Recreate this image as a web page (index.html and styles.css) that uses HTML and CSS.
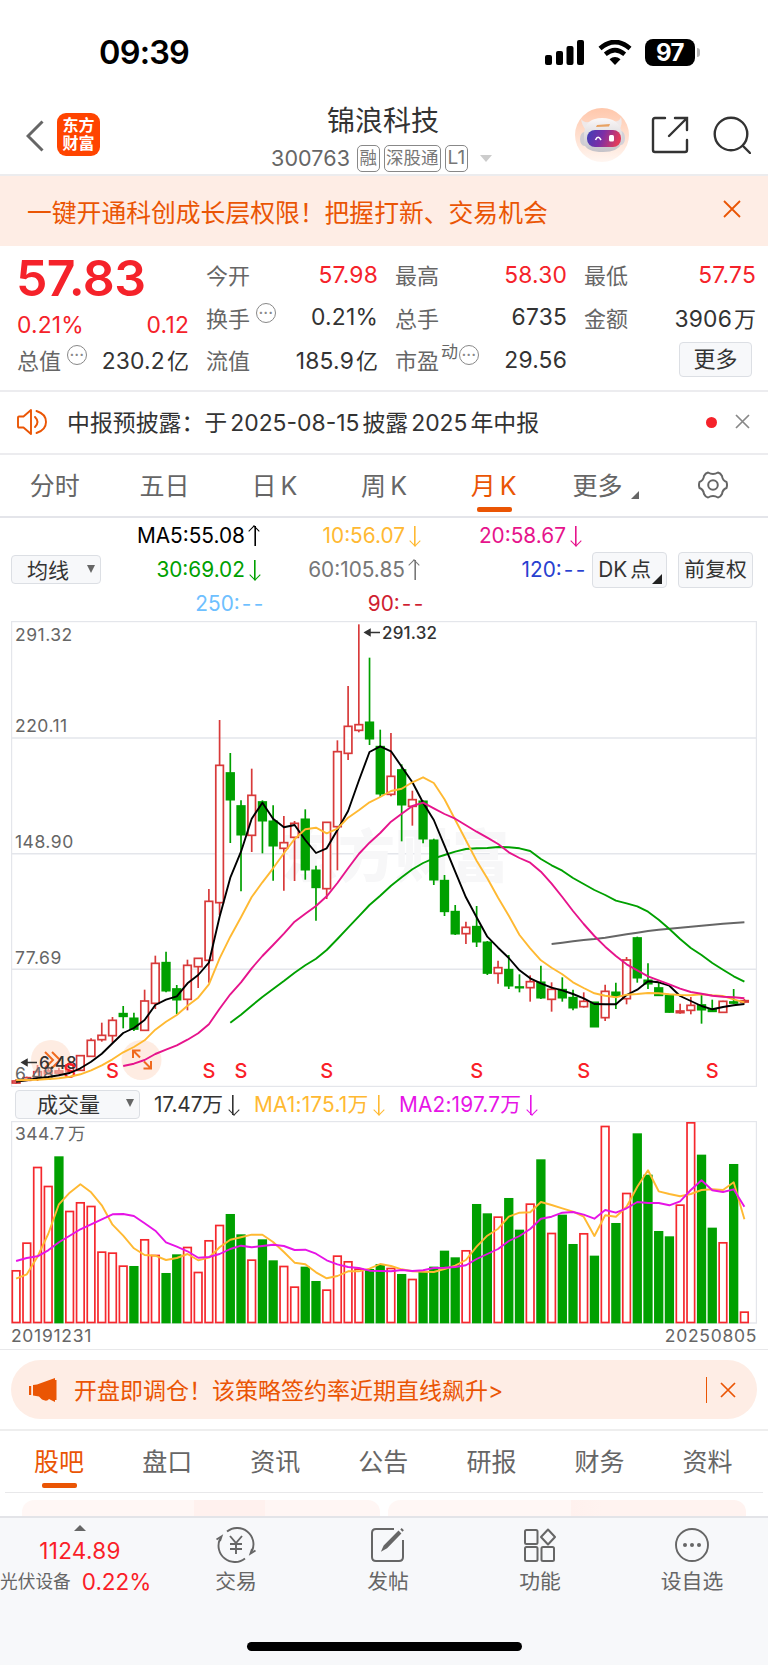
FILE: index.html
```html
<!DOCTYPE html>
<html lang="zh-CN">
<head>
    <meta charset="UTF-8">
    <meta name="viewport" content="width=device-width, initial-scale=1.0">
    <title>锦浪科技 300763</title>
    <link rel="stylesheet" href="styles.css">
</head>
<body>
    <!-- Status bar -->
    <div class="status-bar">
        <div class="clock">09:39</div>
        <svg class="signal" width="39" height="25" viewBox="0 0 39 25">
            <rect x="0" y="15" width="7" height="10" rx="2"/>
            <rect x="11" y="11" width="7" height="14" rx="2"/>
            <rect x="21.5" y="6" width="7" height="19" rx="2"/>
            <rect x="32" y="0" width="7" height="25" rx="2"/>
        </svg>
        <svg class="wifi" width="34" height="25" viewBox="0 0 34 25">
            <path d="M2 8.5 Q17 -4.5 32 8.5" fill="none" stroke="#000" stroke-width="4.6"/>
            <path d="M7.3 14.2 Q17 6 26.7 14.2" fill="none" stroke="#000" stroke-width="4.4"/>
            <path d="M11.5 19.3 Q17 14.5 22.5 19.3 L17 25 Z"/>
        </svg>
        <div class="battery">97</div>
        <div class="battery-tip"></div>
    </div>

    <!-- Header -->
    <div class="header">
        <div class="header-left">
            <svg width="18" height="32" viewBox="0 0 18 32">
                <path d="M16.5 1.5 L2 16 L16.5 30.5" fill="none" stroke="#666" stroke-width="3"/>
            </svg>
            <div class="app-logo">东方<br>财富</div>
        </div>
        <div class="header-title">
            <div class="stock-name">锦浪科技</div>
            <div class="stock-code">
                <span class="code">300763</span>
                <span class="tag">融</span><span class="tag">深股通</span><span class="tag">L1</span>
                <span class="caret"></span>
            </div>
        </div>
        <div class="header-right">
            <svg width="54" height="54" viewBox="0 0 54 54">
                <defs>
                    <linearGradient id="halo" x1="0" y1="0" x2="0" y2="1">
                        <stop offset="0" stop-color="#ffc7ab"/><stop offset="1" stop-color="#fff6f1"/>
                    </linearGradient>
                    <linearGradient id="visor" x1="0" y1="0" x2="1" y2="0.2">
                        <stop offset="0" stop-color="#3d3fb8"/><stop offset="0.5" stop-color="#7b2fa6"/><stop offset="1" stop-color="#e03a5c"/>
                    </linearGradient>
                    <linearGradient id="helmet" x1="0" y1="0" x2="0" y2="1">
                        <stop offset="0" stop-color="#fbf8f8"/><stop offset="1" stop-color="#c4c2c8"/>
                    </linearGradient>
                </defs>
                <circle cx="27" cy="27" r="27" fill="url(#halo)"/>
                <path d="M6 11 Q7 18 11 22 L18 13 Q9 16 6 11 Z M46 9 Q48 17 44 22 L36 13 Q44 15 46 9 Z" fill="#efe9ea"/>
                <ellipse cx="9.5" cy="31" rx="4.5" ry="7" fill="#cfcdd3"/>
                <ellipse cx="46" cy="30" rx="4" ry="7" fill="#d4d2d8"/>
                <path d="M9 25 Q11 10 27 10 Q44 10 47 25 L47 35 Q43 44 28 44 Q12 44 9 36 Z" fill="url(#helmet)"/>
                <path d="M22 17 L35 16 L34 18.500 L21 19 Z" fill="#e8a262"/>
                <rect x="12" y="22" width="34" height="17" rx="8" fill="url(#visor)"/>
                <path d="M20.5 32 Q23 26.5 26 32" fill="none" stroke="#fff" stroke-width="1.6"/>
                <rect x="34" y="27" width="5" height="6.5" rx="1.5" fill="#fff"/>
            </svg>
            <svg width="38" height="38" viewBox="0 0 38 38" fill="none" stroke="#333" stroke-width="2.4" stroke-linecap="round">
                <path d="M14 2 H4 Q2 2 2 4 V34 Q2 36 4 36 H34 Q36 36 36 34 V24"/>
                <path d="M24 2 H36 V14 M36 2 L18 20"/>
            </svg>
            <svg width="38" height="38" viewBox="0 0 38 38" fill="none" stroke="#333" stroke-width="2.4" stroke-linecap="round">
                <circle cx="18" cy="18" r="16.3"/>
                <path d="M30 30 L37 37"/>
            </svg>
        </div>
    </div>

    <!-- Top banner -->
    <div class="banner">
        <span>一键开通科创成长层权限！把握打新、交易机会</span>
        <svg width="18" height="18" viewBox="0 0 18 18"><path d="M1 1 L17 17 M17 1 L1 17" stroke="#ea5504" stroke-width="1.8"/></svg>
    </div>

    <!-- Quote -->
    <div class="quote">
        <div class="quote-col main-col">
            <div class="price">57.83</div>
            <div class="cell change red"><b>0.21%</b><b>0.12</b></div>
            <div class="cell"><span>总值<i class="dots">···</i></span><b>230.2<em>亿</em></b></div>
        </div>
        <div class="quote-col">
            <div class="cell red"><span>今开</span><b>57.98</b></div>
            <div class="cell"><span>换手<i class="dots">···</i></span><b>0.21%</b></div>
            <div class="cell"><span>流值</span><b>185.9<em>亿</em></b></div>
        </div>
        <div class="quote-col">
            <div class="cell red"><span>最高</span><b>58.30</b></div>
            <div class="cell"><span>总手</span><b>6735</b></div>
            <div class="cell"><span>市盈<sup>动</sup><i class="dots tight">···</i></span><b>29.56</b></div>
        </div>
        <div class="quote-col">
            <div class="cell red"><span>最低</span><b>57.75</b></div>
            <div class="cell"><span>金额</span><b>3906<em>万</em></b></div>
            <div class="cell more-cell"><div class="more-btn">更多</div></div>
        </div>
    </div>

    <!-- Notice -->
    <div class="notice">
        <svg width="31" height="26" viewBox="0 0 31 26" fill="none" stroke="#ea5504" stroke-width="1.9" stroke-linejoin="round" stroke-linecap="round">
            <path d="M1 8.5 Q1 7.5 2 7.5 H6.5 L14 1 V25 L6.5 18.5 H2 Q1 18.5 1 17.5 Z"/>
            <path d="M18 8 Q23 13 18 18 M19.5 2 Q29 5 29 13 Q29 21 19.5 24"/>
        </svg>
        <span class="notice-text">中报预披露：于<u>2025-08-15</u>披露<u>2025</u>年中报</span>
        <span class="red-dot"></span>
        <svg width="15" height="15" viewBox="0 0 15 15"><path d="M1 1 L14 14 M14 1 L1 14" stroke="#888" stroke-width="1.7"/></svg>
    </div>

    <!-- Period tabs -->
    <div class="period-tabs">
        <div class="tab">分时</div>
        <div class="tab">五日</div>
        <div class="tab">日<u>K</u></div>
        <div class="tab">周<u>K</u></div>
        <div class="tab active">月<u>K</u></div>
        <div class="tab with-corner">更多<i class="corner"></i></div>
        <div class="tab gear">
            <svg width="30" height="28" viewBox="0 0 30 28" fill="none" stroke="#666" stroke-width="2">
                <path d="M10 1.5 Q15 4.5 20 1.5 Q22.5 2 24 5 Q24.500 9.500 28.500 11 Q29.500 14 28.500 17 Q24.500 18.500 24 23 Q22.500 26 20 26.500 Q15 23.500 10 26.500 Q7.500 26 6 23 Q5.500 18.500 1.500 17 Q.500 14 1.500 11 Q5.500 9.500 6 5 Q7.500 2 10 1.500 Z"/>
                <circle cx="15" cy="14" r="4.800"/>
            </svg>
        </div>
    </div>

    <!-- Moving averages -->
    <div class="ma-panel">
        <div class="select ma-select">均线<i></i></div>
        <div class="ma-grid">
            <span class="ma5">MA5:55.08<s class="up"></s></span>
            <span class="ma10">10:56.07<s></s></span>
            <span class="ma20">20:58.67<s></s></span>
            <span class="ma30">30:69.02<s></s></span>
            <span class="ma60">60:105.85<s class="up"></s></span>
            <span class="ma120">120:<u>--</u></span>
            <span class="ma250">250:<u>--</u></span>
            <span class="ma90">90:<u>--</u></span>
        </div>
        <div class="small-btn dk-btn">DK<em>点</em><i class="corner"></i></div>
        <div class="small-btn">前复权</div>
    </div>

    <!-- Monthly candles -->
    <svg id="k-chart" class="chart" width="746" height="466" viewBox="11 6 746 466">
        <g class="frame">
            <rect x="11.5" y="6.500" width="745" height="465"/>
            <path d="M11 123 H757 M11 238.700 H757 M11 354.300 H757"/>
        </g>
        <text class="watermark" x="281" y="262">东方财富</text>
        <g id="candles"></g>
        <g class="chart-btn">
            <circle cx="51" cy="445" r="20"/>
            <circle cx="141.500" cy="445" r="20"/>
            <path d="M45 437 L53 445 L45 453 M52 437 L60 445 L52 453"/>
            <path d="M133 443 V435.500 H140.500 M133 435.500 L140 442.500 M151 446 V453.500 H143.500 M151 453.500 L144 446.500"/>
        </g>
        <g class="axis">
            <text x="15" y="26">291.32</text>
            <text x="15" y="117">220.11</text>
            <text x="15" y="233">148.90</text>
            <text x="15" y="349">77.69</text>
            <text x="15" y="465">6.48</text>
        </g>
        <g class="mark">
            <path d="M367 17.500 H380 M365 17.500 L370 14.500 V20.500 Z M24 447.500 H37 M22 447.500 L27 444.500 V450.500 Z"/>
            <text x="382" y="24">291.32</text>
            <text x="39" y="454">6.48</text>
        </g>
        <g class="signals" id="signals"></g>
        <g id="ma-lines"></g>
    </svg>

    <!-- Volume -->
    <div class="volume-head">
        <div class="select volume-select">成交量<i></i></div>
        <span class="v-now">17.47万<s></s></span>
        <span class="v-ma1">MA1:175.1万<s></s></span>
        <span class="v-ma2">MA2:197.7万<s></s></span>
    </div>
    <svg id="v-chart" class="chart" width="746" height="203" viewBox="11 41 746 203">
        <rect class="frame" x="11.500" y="41.500" width="745" height="201.500"/>
        <text class="axis" x="15" y="59.500">344.7<tspan dx="3">万</tspan></text>
        <g id="volumes"></g>
    </svg>
    <div class="dates"><span>20191231</span><span>20250805</span></div>

    <!-- Promo -->
    <div class="promo-wrap">
        <div class="promo">
            <svg width="28" height="24" viewBox="0 0 28 24" fill="#ea5504">
                <path d="M0 8 H2.200 V17 H0 Z M4 7 L8 6.500 L26 0 V2 H27.500 V22 H26 V24 L20 21 Q18 24 13 21.500 L10 18.500 L4 17.500 Z"/>
            </svg>
            <span class="promo-text">开盘即调仓！该策略签约率近期直线飙升&gt;</span>
            <span class="promo-line"></span>
            <svg width="16" height="16" viewBox="0 0 16 16"><path d="M1 1 L15 15 M15 1 L1 15" stroke="#ea5504" stroke-width="1.700"/></svg>
        </div>
    </div>

    <!-- Content tabs -->
    <div class="content-tabs">
        <div class="tab active">股吧</div>
        <div class="tab">盘口</div>
        <div class="tab">资讯</div>
        <div class="tab">公告</div>
        <div class="tab">研报</div>
        <div class="tab">财务</div>
        <div class="tab">资料</div>
    </div>
    <div class="cards">
        <div class="card"></div>
        <div class="card right-card"></div>
    </div>

    <!-- Bottom bar -->
    <div class="bottom-bar">
        <div class="index-box">
            <i class="tri-up"></i>
            <div class="index-value">1124.89</div>
            <div class="index-row"><span>光伏设备</span><b>0.22%</b></div>
        </div>
        <div class="bar-item">
            <svg width="40" height="36" viewBox="0 0 40 36" fill="none" stroke="#666" stroke-width="1.900">
                <path d="M11 4.500 A16.300 16.300 0 0 1 36 24 M29 31.500 A16.300 16.300 0 0 1 4 12"/>
                <path d="M0.500 12.500 L5.500 9.500 L4 14 M39.500 23.500 L34.500 26.500 L36 22"/>
                <path d="M14 9 L20 16 L26 9 M20 16 V27 M14 17 H26 M14 22 H26"/>
            </svg>
            <span>交易</span>
        </div>
        <div class="bar-item">
            <svg width="36" height="36" viewBox="0 0 36 36" fill="none" stroke="#666" stroke-width="2">
                <path d="M24 2 H6 Q2 2 2 6 V30 Q2 34 6 34 H29 Q33 34 33 30 V13"/>
                <path d="M13 22.500 L14.500 19 L28.500 5 L30 6.500 L16.500 20.500 Z M31 1.800 L33.200 4" fill="#666"/>
            </svg>
            <span>发帖</span>
        </div>
        <div class="bar-item">
            <svg width="34" height="36" viewBox="0 0 34 36" fill="none" stroke="#666" stroke-width="2" stroke-linejoin="round">
                <rect x="2" y="3" width="12.500" height="14" rx="1.500"/>
                <rect x="2" y="20" width="12.500" height="14" rx="1.500"/>
                <rect x="18.500" y="20" width="12.500" height="14" rx="1.500"/>
                <path d="M25 2.500 L32 10 L25 17.500 L18 10 Z"/>
            </svg>
            <span>功能</span>
        </div>
        <div class="bar-item">
            <svg width="36" height="36" viewBox="0 0 36 36">
                <circle cx="18" cy="18" r="16" fill="none" stroke="#666" stroke-width="1.900"/>
                <g fill="#666"><circle cx="11" cy="18" r="2"/><circle cx="18" cy="18" r="2"/><circle cx="25" cy="18" r="2"/></g>
            </svg>
            <span>设自选</span>
        </div>
        <div class="home-indicator"></div>
    </div>

    <script src="script.js"></script>
</body>
</html>
```

FILE: styles.css
```css
* {
    box-sizing: border-box;
}

body {
    margin: 0;
    width: 768px;
    height: 1665px;
    overflow: hidden;
    background-color: #fff;
    color: #333;
    font-family: Inter, "Noto Sans CJK SC", sans-serif;
    display: flex;
    flex-direction: column;
}

body > * {
    flex-shrink: 0;
}

b, i, em, u, s {
    font-weight: normal;
    font-style: normal;
    text-decoration: none;
}

svg {
    display: block;
}

/* Status bar */
.status-bar {
    height: 100px;
    padding: 4px 68px 0 99px;
    display: flex;
    align-items: center;
    color: #000;
}

.clock {
    font-size: 32.500px;
    font-weight: 600;
    letter-spacing: -0.8px;
    margin-right: auto;
}

.signal {
    margin-right: 14px;
}

.wifi {
    margin-right: 13px;
}

.battery {
    width: 50px;
    height: 27px;
    line-height: 27px;
    border-radius: 8px;
    background-color: #000;
    color: #fff;
    text-align: center;
    font-size: 24px;
    font-weight: 700;
    letter-spacing: -0.5px;
}

.battery-tip {
    width: 3px;
    height: 9px;
    margin-left: 2px;
    border-radius: 0 3px 3px 0;
    background-color: #b5b5b5;
}

/* Header */
.header {
    height: 76px;
    padding: 1px 17px 0 26px;
    display: flex;
    border-bottom: 2px solid #ececee;
}

.header-left {
    width: 219px;
    display: flex;
    align-items: center;
    padding-bottom: 6px;
}

.header-left svg {
    margin-top: 2px;
}

.app-logo {
    width: 43px;
    height: 43px;
    margin-left: 13px;
    padding-top: 4px;
    border-radius: 9px;
    background-color: #ff4400;
    color: #fff;
    font-size: 16px;
    line-height: 17.5px;
    font-weight: 700;
    text-align: center;
}

.header-title {
    width: 276px;
    text-align: center;
}

.stock-name {
    font-size: 28px;
    line-height: 40px;
}

.stock-code {
    display: flex;
    align-items: center;
    margin-left: 26px;
    height: 34px;
    color: #777;
}

.code {
    font-size: 21.5px;
    letter-spacing: 0.1px;
    margin-right: 7px;
    color: #666;
}

.tag {
    height: 27px;
    padding: 0 1.500px;
    margin-right: 4px;
    border: 1.5px solid #888;
    border-radius: 5px;
    font-size: 17.500px;
    line-height: 24px;
}

.tag:nth-of-type(4) {
    font-size: 19px;
}

.caret {
    margin-left: 8px;
    border: 6px solid transparent;
    border-top: 7px solid #ccc;
    border-bottom: 0;
}

.header-right {
    display: flex;
    align-items: center;
    gap: 22px;
    margin-left: auto;
    padding-bottom: 6px;
}

.header-right svg:last-child {
    margin-left: 2px;
}

/* Top banner */
.banner {
    height: 70px;
    padding: 0 27px;
    display: flex;
    align-items: center;
    justify-content: space-between;
    background-color: #feede5;
    color: #ea5504;
    font-size: 24.800px;
}

.banner svg {
    margin-bottom: 4px;
}

/* Quote */
.quote {
    height: 146px;
    padding: 8px 12px 0 17px;
    display: flex;
    gap: 17px;
    border-bottom: 2px solid #ececef;
}

.quote-col {
    flex: 1;
}

.price {
    height: 50px;
    line-height: 49px;
    margin-left: -1px;
    font-size: 50px;
    font-weight: 600;
    letter-spacing: -0.600px;
    color: #f5222a;
}

.cell {
    height: 42.500px;
    padding-bottom: 2px;
    display: flex;
    align-items: center;
    justify-content: space-between;
    font-size: 22px;
    color: #666;
}

.cell.change {
    height: 35px;
    padding: 5px 0 0;
}

.cell > span {
    display: flex;
    align-items: center;
}

.cell b {
    font-size: 22.800px;
    letter-spacing: 0.200px;
    color: #333;
}

.cell.red b {
    color: #f5222a;
}

.cell em {
    font-size: 22px;
    margin-left: 2px;
    letter-spacing: 0;
}

.cell sup {
    font-size: 17px;
    line-height: 20px;
    margin-bottom: 14px;
    margin-left: 2px;
}

.dots {
    width: 20px;
    height: 20px;
    margin-left: 6px;
    margin-bottom: 8px;
    border: 1.500px solid #888;
    border-radius: 50%;
    line-height: 16px;
    font-size: 13px;
    font-weight: 700;
    letter-spacing: 0.500px;
    text-align: center;
    color: #888;
}

.dots.tight {
    margin-left: 1px;
}

.more-cell {
    justify-content: flex-end;
    padding-right: 4px;
}

.more-btn {
    width: 73px;
    height: 35px;
    border: 1px solid #dcdfe4;
    border-radius: 4px;
    background-color: #f7f8fa;
    line-height: 32px;
    text-align: center;
    color: #333;
}

/* Notice */
.notice {
    height: 63px;
    padding: 0 18px 0 17px;
    display: flex;
    align-items: center;
    border-bottom: 2px solid #ececef;
}

.notice > svg {
    margin-bottom: 2px;
}

.notice-text {
    margin-left: 19px;
    margin-right: auto;
    padding-bottom: 3px;
    font-size: 22.900px;
}

.notice-text u {
    margin: 0 3px;
}

.red-dot {
    width: 11px;
    height: 11px;
    margin-right: 18px;
    margin-bottom: 1px;
    border-radius: 50%;
    background-color: #f5222a;
}

/* Tabs */
.tab {
    position: relative;
    text-align: center;
    font-size: 25px;
    color: #666;
}

.tab u {
    margin-left: 4px;
}

.tab.active {
    color: #ea5504;
}

.tab.active::after {
    content: "";
    position: absolute;
    left: 50%;
    bottom: 4px;
    width: 35px;
    height: 5px;
    margin-left: -17px;
    border-radius: 2px;
    background-color: #ea5504;
}

.period-tabs {
    height: 63px;
    display: flex;
    border-bottom: 2px solid #e4e5ea;
}

.period-tabs .tab {
    width: 109.800px;
    line-height: 62px;
}

.corner {
    display: inline-block;
    border-left: 8px solid transparent;
    border-bottom: 8px solid #666;
}

.period-tabs .corner {
    margin-left: 9px;
    vertical-align: -4px;
}

.tab.with-corner {
    padding-left: 5px;
}

.tab.gear svg {
    margin: 16px 0 0 39.500px;
}

/* Moving averages */
.ma-panel {
    height: 103px;
    padding: 0 15px 0 11px;
    display: flex;
    align-items: center;
}

.select {
    display: flex;
    align-items: center;
    justify-content: space-between;
    border: 1px solid #dcdfe4;
    border-radius: 4px;
    background-color: #f7f8fa;
    font-size: 21px;
}

.select i {
    border: 4.500px solid transparent;
    border-top: 8px solid #666;
    border-bottom: 0;
}

.ma-select {
    width: 90px;
    height: 29px;
    padding: 0 5px 2px 15px;
}

.ma-grid {
    width: 492px;
    display: grid;
    grid-template-columns: 159px 160px 161px;
    grid-auto-rows: 33.600px;
    align-items: center;
    text-align: right;
    font-size: 20.800px;
    letter-spacing: 0;
}

.ma-grid u {
    margin-left: 2px;
    letter-spacing: 2.500px;
}

/* Thin trend arrow behind a value */
s {
    position: relative;
    display: inline-block;
    width: 10px;
    height: 20px;
    margin-left: 5px;
    vertical-align: -3px;
    background: linear-gradient(currentColor, currentColor) center / 1.600px 100% no-repeat;
}

s::after {
    content: "";
    position: absolute;
    left: 1.500px;
    bottom: 1px;
    width: 7px;
    height: 7px;
    border: solid currentColor;
    border-width: 0 1.600px 1.600px 0;
    transform: rotate(45deg);
}

s.up {
    transform: rotate(180deg);
}

.ma5 { color: #000; }
.ma10, .v-ma1 { color: #ffb932; }
.ma20 { color: #e6148c; }
.ma30 { color: #00a000; }
.ma60 { color: #777; }
.ma120 { color: #2840d0; margin-right: -7px; }
.ma250 { color: #6ec0ff; margin-right: -6px; }
.ma90 { color: #cf2030; margin-right: -6px; }

.small-btn {
    width: 75px;
    height: 36px;
    border: 1px solid #dcdfe4;
    border-radius: 4px;
    background-color: #f7f8fa;
    text-align: center;
    line-height: 33px;
    font-size: 20.800px;
    white-space: nowrap;
}

.dk-btn {
    position: relative;
    margin-right: 11px;
    padding-right: 10px;
}

.dk-btn em {
    margin-left: 3px;
}

.dk-btn .corner {
    position: absolute;
    right: 4px;
    bottom: 3px;
    border-left-width: 10px;
    border-bottom: 10px solid #222;
}

/* Charts */
.chart {
    margin-left: 11px;
}

.frame {
    fill: none;
    stroke: #e4e6eb;
    stroke-width: 1.400;
}

.axis {
    fill: #666;
    font-size: 17.500px;
    letter-spacing: 0.500px;
}

.watermark {
    fill: #f7f7f8;
    font-size: 57px;
    font-weight: 900;
}

.mark text {
    fill: #333;
    font-size: 17px;
    font-weight: 500;
    letter-spacing: 0.200px;
}

.mark path {
    fill: #333;
    stroke: #333;
    stroke-width: 1.500;
}

.chart-btn circle {
    fill: #fdd9c6;
    fill-opacity: 0.500;
}

.chart-btn path {
    fill: none;
    stroke: #f06a1e;
    stroke-width: 2;
}

.signals text {
    fill: #fa1e28;
    font-size: 20px;
    font-weight: 500;
    text-anchor: middle;
}

.rise {
    fill: #fff;
    stroke: #d83a3a;
    stroke-width: 1.700;
}

.fall {
    fill: #00a000;
    stroke: #00a000;
    stroke-width: 1.700;
}

#volumes .rise {
    stroke: #f5282d;
}

.line {
    fill: none;
    stroke-width: 1.900;
    stroke-linejoin: round;
}

/* Volume */
.volume-head {
    height: 34px;
    padding: 0 0 0 15px;
    display: flex;
    align-items: center;
    font-size: 20.800px;
    letter-spacing: 0.200px;
}

.volume-head span {
    margin-top: -2px;
}

.volume-head s {
    margin-left: 5px;
}

.volume-select {
    width: 125px;
    height: 29px;
    padding: 0 5px 2px 21px;
    margin-right: 14px;
    letter-spacing: 0;
}

.v-now {
    width: 100px;
    letter-spacing: -0.100px;
}

.v-ma1 {
    width: 145px;
}

.v-ma2 {
    color: #e614e6;
}

.dates {
    height: 26px;
    padding: 0 11px;
    display: flex;
    justify-content: space-between;
    border-bottom: 1px solid #e8e8ea;
    font-size: 17.500px;
    line-height: 23px;
    letter-spacing: 0.700px;
    color: #666;
}

/* Promo */
.promo-wrap {
    height: 81px;
    padding: 10px 11px 0;
    border-bottom: 2px solid #eee;
}

.promo {
    height: 59px;
    padding: 0 21px 0 18px;
    display: flex;
    align-items: center;
    border-radius: 30px;
    background-color: #feede5;
    color: #ea5504;
}

.promo-text {
    margin: 0 auto 0 17px;
    padding-bottom: 2px;
    font-size: 23px;
}

.promo-line {
    width: 1.500px;
    height: 26px;
    margin-right: 13px;
    background-color: #ea5504;
}

/* Content tabs */
.content-tabs {
    height: 62px;
    margin: 0 5px;
    display: flex;
    border-bottom: 1px solid #e8e8ea;
}

.content-tabs .tab {
    width: 108.100px;
    line-height: 62px;
}

.cards {
    height: 23px;
    padding: 7px 22px 0;
    display: flex;
    gap: 8px;
    overflow: hidden;
}

.card {
    flex: 1;
    height: 40px;
    border-radius: 12px;
    background: linear-gradient(90deg, #fff7f5 48%, #fff1ee 48%, #fff1ee 68%, #fff6f4 68%);
}

.right-card {
    background: linear-gradient(90deg, #fff7f5 51%, #fff1ee 51%, #fff3f0 60%, #fff3f0 100%);
}

/* Bottom bar */
.bottom-bar {
    position: relative;
    height: 150px;
    display: flex;
    border-top: 2px solid #e3e4e8;
    background-color: #f7f8fa;
}

.index-box {
    width: 160px;
    display: flex;
    flex-direction: column;
    align-items: center;
    color: #fa1e28;
}

.tri-up {
    margin-top: 7px;
    border: 6px solid transparent;
    border-bottom: 6px solid #666;
    border-top: 0;
}

.index-value {
    font-size: 22.500px;
    line-height: 26px;
    margin-top: 7px;
    letter-spacing: 0.300px;
}

.index-row {
    width: 100%;
    margin-top: 3px;
    display: flex;
    align-items: center;
    font-size: 22.500px;
    line-height: 30px;
}

.index-row span {
    margin-right: 11px;
    font-size: 17.700px;
    letter-spacing: 0;
    color: #666;
}

.bar-item {
    width: 152px;
    padding-top: 9px;
    display: flex;
    flex-direction: column;
    align-items: center;
    font-size: 20.800px;
    line-height: 37px;
    color: #666;
}

.home-indicator {
    position: absolute;
    left: 247px;
    bottom: 15px;
    width: 275px;
    height: 9px;
    border-radius: 5px;
    background-color: #000;
}
```

FILE: script.js
```js
// [high, body top, body bottom, low, up?] in thirds of a pixel, one row per month
var candles = [
    [1393, 1398, 1404, 1406, 1], [1385, 1388, 1396, 1398, 1], [1350, 1370, 1385, 1398, 1], [1340, 1368, 1376, 1380, 1],
    [1358, 1368, 1374, 1380, 1], [1338, 1350, 1370, 1372, 1], [1322, 1322, 1366, 1366, 1], [1270, 1276, 1324, 1326, 1],
    [1223, 1261, 1274, 1280, 1], [1206, 1216, 1262, 1283, 1], [1173, 1196, 1204, 1240, 0], [1193, 1210, 1242, 1248, 0],
    [1124, 1158, 1246, 1246, 1], [1022, 1045, 1165, 1182, 1], [1010, 1043, 1127, 1132, 0], [1110, 1122, 1154, 1197, 0],
    [1034, 1051, 1153, 1186, 1], [1030, 1030, 1055, 1119, 1], [822, 859, 1036, 1103, 1], [315, 451, 863, 900, 1],
    [414, 474, 554, 684, 0], [556, 573, 659, 829, 0], [461, 541, 661, 711, 1], [556, 561, 617, 715, 0],
    [571, 619, 692, 797, 0], [603, 683, 700, 827, 1], [618, 625, 667, 798, 1], [583, 613, 764, 794, 0],
    [752, 766, 817, 917, 0], [622, 622, 821, 852, 1], [376, 410, 635, 766, 1], [213, 334, 415, 435, 1],
    [28, 329, 346, 352, 1], [128, 322, 371, 390, 0], [344, 395, 536, 546, 0], [354, 484, 538, 544, 1],
    [448, 465, 569, 679, 0], [527, 554, 574, 632, 1], [556, 559, 671, 685, 0], [671, 676, 794, 810, 0],
    [780, 797, 889, 903, 0], [870, 890, 956, 960, 0], [920, 937, 956, 987, 1], [873, 935, 980, 996, 0],
    [978, 982, 1074, 1080, 0], [1037, 1058, 1075, 1106, 1], [1020, 1064, 1112, 1122, 0], [1078, 1116, 1118, 1132, 0],
    [1081, 1100, 1118, 1160, 1], [1052, 1102, 1148, 1152, 0], [1102, 1123, 1153, 1190, 1], [1087, 1124, 1148, 1160, 0],
    [1124, 1148, 1178, 1186, 0], [1132, 1159, 1175, 1178, 1], [1162, 1162, 1235, 1235, 0], [1109, 1129, 1208, 1218, 1],
    [1103, 1132, 1143, 1182, 0], [1026, 1035, 1151, 1168, 1], [965, 969, 1088, 1103, 0], [1045, 1096, 1106, 1122, 0],
    [1103, 1119, 1141, 1143, 0], [1140, 1142, 1191, 1193, 0], [1166, 1188, 1193, 1196, 1], [1146, 1171, 1186, 1198, 1],
    [1138, 1170, 1184, 1226, 0], [1154, 1183, 1189, 1190, 0], [1157, 1159, 1192, 1194, 1], [1122, 1161, 1164, 1167, 0],
    [1152, 1157, 1161, 1165, 1]
];

var volumes = [571, 488, 261, 318, 230, 393, 367, 378, 515, 518, 557, 559, 478, 525, 580, 524, 501, 576, 481, 435, 403, 464, 539,
    479, 542, 558, 620, 561, 604, 629, 527, 544, 566, 568, 553, 564, 583, 597, 575, 561, 513, 533, 511, 373, 401, 410, 355, 450,
    371, 239, 459, 405, 493, 460, 528, 138, 430, 339, 161, 285, 454, 470, 374, 127, 225, 444, 487, 253, 695];
var volumeDown = [4, 11, 14, 15, 20, 21, 23, 24, 27, 28, 33, 34, 36, 38, 39, 40, 41, 43, 44, 46, 47, 49, 51, 52, 54, 56, 58, 59,
    60, 61, 64, 65, 67];

// color, first month, values
var maLines = [
    ['#666', 50, [987, 983, 979, 975, 972, 968, 963, 958, 953, 948, 944, 941, 938, 935, 932, 929, 926, 924, 922]],
    ['#00a000', 20, [1223, 1199, 1172, 1146, 1122, 1098, 1073, 1051, 1031, 1005, 972, 938, 904, 870, 842, 812, 787, 763, 744, 730,
        720, 710, 702, 700, 699, 696, 697, 700, 708, 732, 751, 767, 789, 807, 825, 840, 857, 865, 874, 890, 914, 942, 972, 999,
        1020, 1044, 1064, 1084, 1100]],
    ['#000', 0, [1400, 1396, 1390, 1386, 1381, 1374, 1360, 1340, 1316, 1285, 1254, 1239, 1215, 1170, 1154, 1144, 1105, 1080, 1043,
        905, 788, 710, 611, 563, 611, 637, 630, 675, 714, 700, 645, 588, 497, 411, 394, 409, 455, 502, 563, 615, 692, 770, 847,
        907, 965, 998, 1029, 1066, 1090, 1105, 1118, 1126, 1137, 1150, 1167, 1168, 1168, 1140, 1124, 1099, 1102, 1112, 1143,
        1158, 1173, 1183, 1176, 1171, 1167]],
    ['#ffb932', 0, [1396, 1395, 1394, 1392, 1390, 1385, 1378, 1366, 1351, 1333, 1312, 1296, 1276, 1244, 1220, 1200, 1172, 1148,
        1108, 1030, 965, 907, 846, 802, 760, 715, 672, 643, 638, 655, 641, 608, 586, 562, 546, 528, 521, 502, 487, 504, 553, 614,
        676, 737, 790, 848, 902, 960, 1000, 1036, 1058, 1078, 1102, 1119, 1135, 1142, 1147, 1139, 1137, 1134, 1135, 1138, 1140,
        1141, 1138, 1141, 1143, 1153, 1162]],
    ['#e6148c', 10, [1353, 1346, 1335, 1317, 1304, 1291, 1274, 1255, 1228, 1181, 1138, 1102, 1060, 1023, 990, 956, 920, 896, 873,
        844, 804, 760, 717, 683, 654, 620, 596, 573, 563, 580, 597, 611, 631, 650, 668, 687, 712, 729, 743, 770, 806, 846, 888,
        927, 963, 995, 1023, 1048, 1066, 1084, 1096, 1108, 1121, 1131, 1136, 1142, 1145, 1147, 1150]]
];
var volumeLines = [
    ['#ffb932', 0, [596, 583, 530, 462, 373, 338, 313, 337, 376, 434, 467, 505, 525, 527, 540, 534, 522, 541, 533, 502, 479, 472,
        464, 464, 486, 516, 548, 553, 577, 595, 588, 574, 574, 566, 552, 558, 568, 574, 575, 576, 567, 557, 540, 500, 467, 446,
        410, 398, 397, 366, 375, 385, 395, 410, 468, 406, 410, 380, 320, 271, 334, 342, 349, 342, 330, 328, 330, 307, 418]],
    ['#e614e6', 0, [543, 534, 529, 511, 487, 467, 448, 433, 418, 403, 402, 408, 430, 452, 487, 500, 514, 533, 531, 522, 507, 497,
        502, 498, 494, 498, 510, 509, 521, 541, 553, 561, 564, 572, 573, 574, 570, 573, 571, 564, 563, 561, 556, 537, 522, 507,
        483, 468, 447, 416, 410, 398, 396, 404, 416, 390, 398, 385, 366, 369, 369, 376, 364, 330, 301, 331, 336, 328, 380]]
];

function xOf(i) {
    return 16.1 + i * 10.71;
}

function rect(x, y, w, h, cls) {
    return '<rect class="' + cls + '" x="' + x + '" y="' + y + '" width="' + w + '" height="' + h + '"/>';
}

function drawLines(lines) {
    return lines.map(function (line) {
        var points = line[2].map(function (v, i) {
            return xOf(line[1] + i).toFixed(1) + ',' + (v / 3).toFixed(1);
        });
        return '<polyline class="line" stroke="' + line[0] + '" points="' + points.join(' ') + '"/>';
    }).join('');
}

document.getElementById('candles').innerHTML = candles.map(function (c, i) {
    var x = xOf(i);
    var cls = c[4] ? 'rise' : 'fall';
    return '<path class="' + cls + '" d="M' + x + ' ' + c[0] / 3 + 'V' + c[3] / 3 + '"/>' +
        rect(x - 3.8, c[1] / 3, 7.6, (c[2] - c[1]) / 3, cls);
}).join('');

document.getElementById('ma-lines').innerHTML = drawLines(maLines);

document.getElementById('signals').innerHTML = [5, 9, 18, 21, 29, 43, 53, 65].map(function (i) {
    return '<text x="' + xOf(i) + '" y="462.5">S</text>';
}).join('');

document.getElementById('volumes').innerHTML = volumes.map(function (v, i) {
    var down = volumeDown.indexOf(i) >= 0;
    return rect(xOf(i) - 3.8, v / 3 + 0.5, 7.6, 242 - v / 3, down ? 'fall' : 'rise');
}).join('') + drawLines(volumeLines);
```
